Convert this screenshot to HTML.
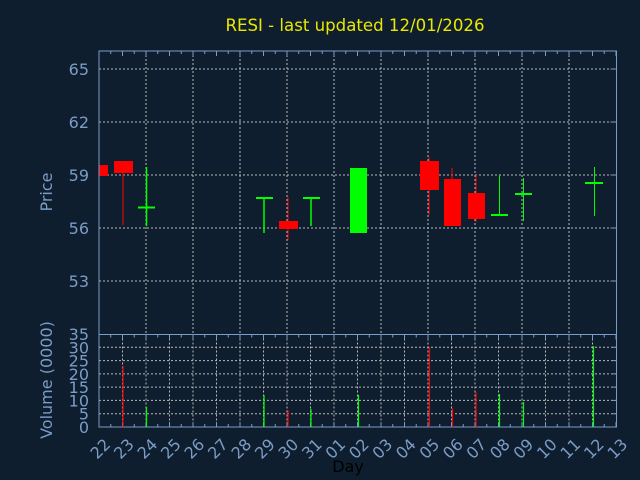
<!DOCTYPE html>
<html><head><meta charset="utf-8"><style>
html,body{margin:0;padding:0;background:#0f1e2e;}
svg{display:block;font-family:"DejaVu Sans","Liberation Sans",sans-serif;}
</style></head><body>
<svg id="s" width="640" height="480" xmlns="http://www.w3.org/2000/svg">
<rect width="640" height="480" fill="#0f1e2e"/>
<text x="355" y="31" fill="#e8e800" font-size="16.6" text-anchor="middle">RESI - last updated 12/01/2026</text>
<g id="g"></g>
<text x="52" y="192" fill="#7a9cc6" font-size="16" text-anchor="middle" transform="rotate(-90 52 192)">Price</text>
<text x="52" y="380" fill="#7a9cc6" font-size="16" text-anchor="middle" transform="rotate(-90 52 380)">Volume (0000)</text>
<text x="348" y="472" fill="#000" font-size="16" text-anchor="middle">Day</text>
</svg>
<script>
var g=document.getElementById('g'),h='';
var L=99,R=616.5,T=51,M=334.5,B=427;
function X(i){return L+23.5*i;}
function PY(p){return 228-(p-56)*53/3;}
var ax='#7a9cc6',gr='#b8b8b8';
[65,62,59,56,53].forEach(function(p){var y=PY(p);h+='<line x1="'+L+'" x2="'+R+'" y1="'+y+'" y2="'+y+'" stroke="'+gr+'" stroke-dasharray="2,2"/>';
h+='<text x="89" y="'+(y+6)+'" fill="'+ax+'" font-size="16" text-anchor="end">'+p+'</text>';
h+='<line x1="'+(R-6)+'" x2="'+R+'" y1="'+y+'" y2="'+y+'" stroke="'+ax+'"/>';});
for(var i=2;i<22;i+=2){var x=X(i);h+='<line x1="'+x+'" x2="'+x+'" y1="'+T+'" y2="'+M+'" stroke="'+gr+'" stroke-dasharray="2,2"/>';}
for(var v=5;v<=30;v+=5){var y=B-v*93/35;h+='<line x1="'+L+'" x2="'+R+'" y1="'+y+'" y2="'+y+'" stroke="'+gr+'" stroke-dasharray="2,2"/>';h+='<line x1="'+(R-5)+'" x2="'+R+'" y1="'+y+'" y2="'+y+'" stroke="'+ax+'"/>';}
for(var v=0;v<=35;v+=5){var y=B-v*93/35;h+='<text x="89" y="'+(y+6)+'" fill="'+ax+'" font-size="16" text-anchor="end">'+v+'</text>';}
for(var i=1;i<22;i++){var x=X(i);h+='<line x1="'+x+'" x2="'+x+'" y1="'+M+'" y2="'+B+'" stroke="'+gr+'" stroke-dasharray="2,2"/>';}
for(var i=0;i<=44;i++){var x=L+11.75*i,l=(i%2==0)?5:3;h+='<line x1="'+x+'" x2="'+x+'" y1="'+T+'" y2="'+(T+l)+'" stroke="'+ax+'"/>';h+='<line x1="'+x+'" x2="'+x+'" y1="'+M+'" y2="'+(M+l)+'" stroke="'+ax+'"/>';h+='<line x1="'+x+'" x2="'+x+'" y1="'+B+'" y2="'+(B-l)+'" stroke="'+ax+'"/>';}
h+='<rect x="'+L+'" y="'+T+'" width="'+(R-L)+'" height="'+(B-T)+'" fill="none" stroke="'+ax+'"/>';
h+='<line x1="'+L+'" x2="'+R+'" y1="'+M+'" y2="'+M+'" stroke="'+ax+'"/>';
var days=['22','23','24','25','26','27','28','29','30','31','01','02','03','04','05','06','07','08','09','10','11','12','13'];
days.forEach(function(d,i){var x=X(i)+4,y=437;h+='<text x="'+x+'" y="'+y+'" fill="'+ax+'" font-size="16" text-anchor="end" dominant-baseline="hanging" transform="rotate(-45 '+x+' '+y+')">'+d+'</text>';});
var RD='#ff0000',GN='#00ff00';
function box(x1,x2,y1,y2,c){h+='<rect x="'+x1+'" y="'+y1+'" width="'+(x2-x1)+'" height="'+(y2-y1)+'" fill="'+c+'"/>';}
function ln(x1,y1,x2,y2,c,w){h+='<line x1="'+x1+'" y1="'+y1+'" x2="'+x2+'" y2="'+y2+'" stroke="'+c+'" stroke-width="'+(w||1)+'"/>';}
box(99.5,108,165,176,RD);
ln(123,170,123,225,RD);box(114,133,161,173,RD);
ln(146.5,167,146.5,226,GN,1.5);ln(138,207.5,155,207.5,GN,2);
ln(264,198,264,233,GN,1.5);ln(256,198,273,198,GN,2);
ln(288,197,288,240,RD);box(279,298,221,229,RD);
ln(311,198,311,226,GN,1.5);ln(303,198,320,198,GN,2);
box(350,367,168,233,GN);
ln(429,157,429,215,RD);box(420,439,161,190,RD);
ln(452,168,452,226,RD);box(444,461,179,226,RD);
ln(476,175,476,222,RD);box(468,485,193,219,RD);
ln(499.5,175,499.5,215,GN);ln(491,215,508,215,GN,2);
ln(523.5,178,523.5,221,GN);ln(515,194,532,194,GN,2);
ln(594.5,167,594.5,216,GN);ln(585,183,603,183,GN,2);
[[123,366,RD],[146.5,407,GN],[264,395,GN],[288,410,RD],[311,409,GN],[358.5,395,GN],[429.5,347,RD],[452.5,408,RD],[476,392,RD],[499.5,394,GN],[523.5,402,GN],[593.5,346,GN]].forEach(function(a){ln(a[0],a[1],a[0],B,a[2],1.2);});
g.innerHTML=h;
</script>
</body></html>
